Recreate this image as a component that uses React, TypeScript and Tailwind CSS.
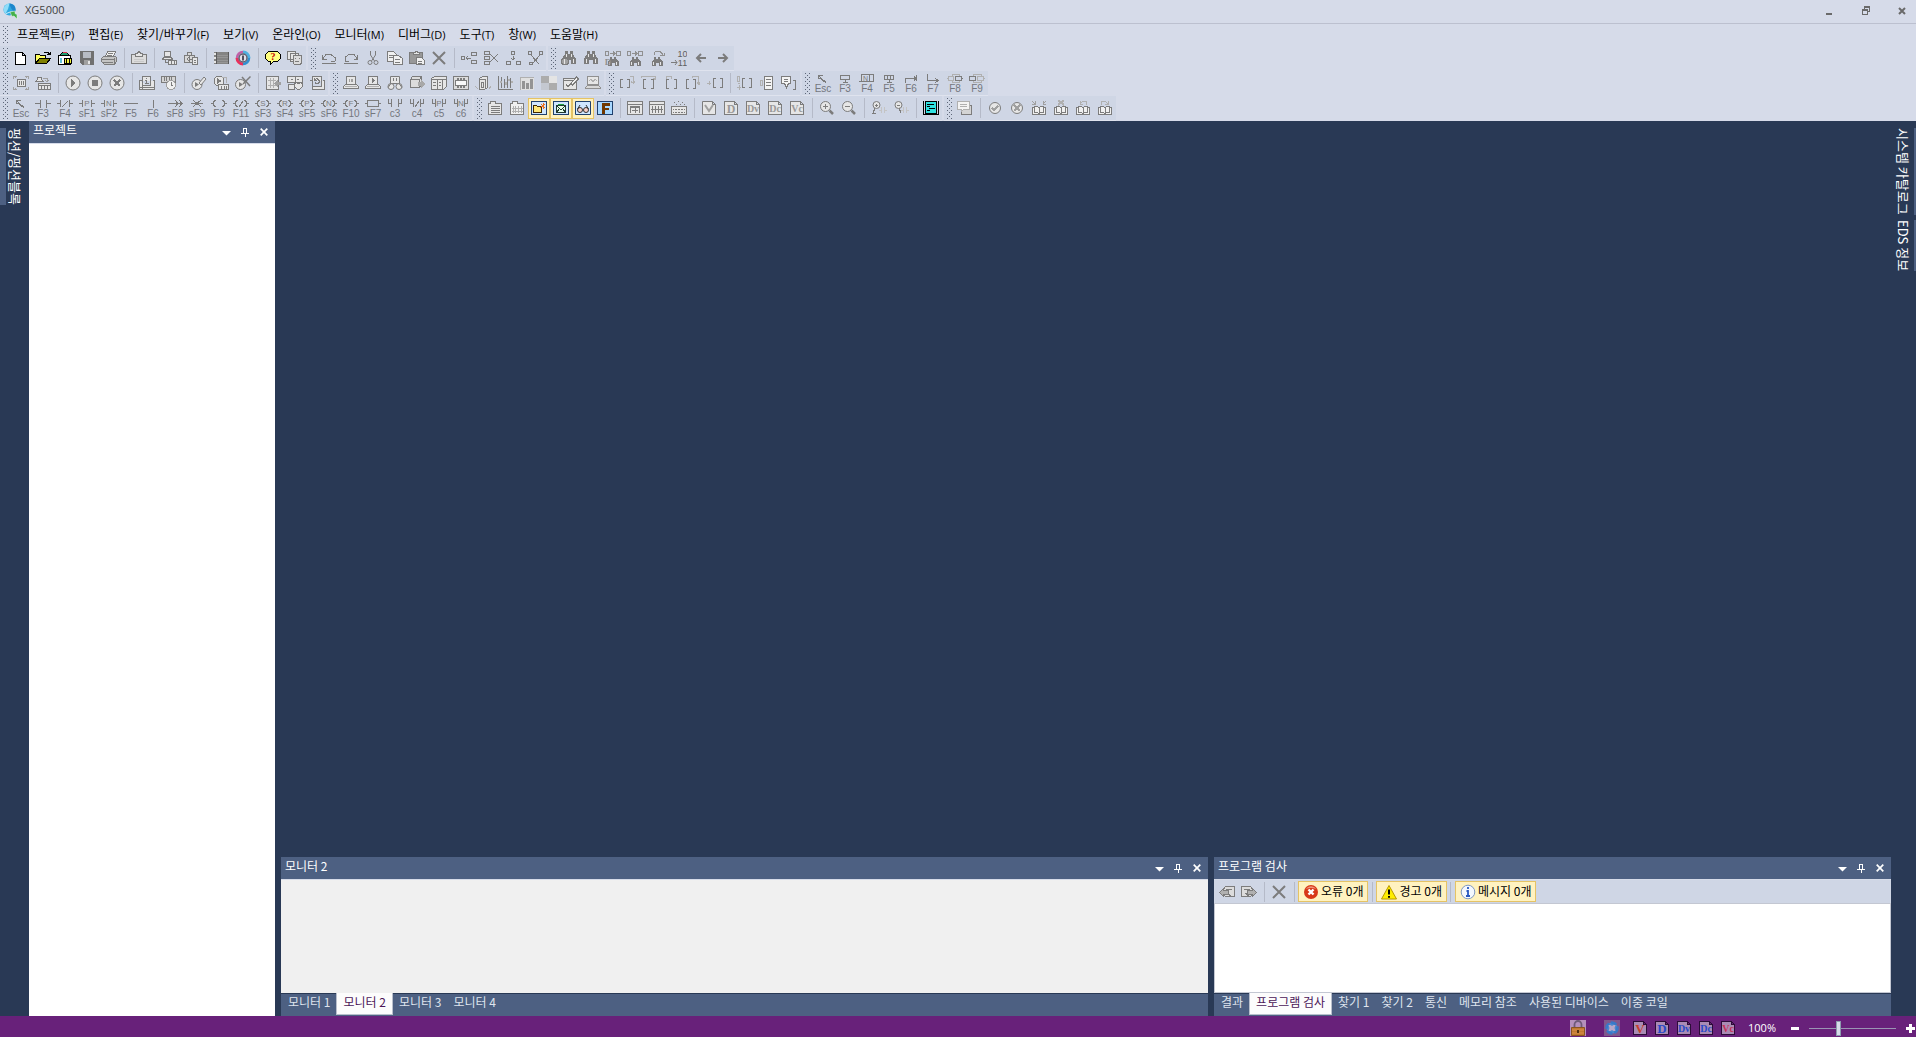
import { useState } from 'react';
import type { ReactNode } from 'react';

const G = '#7c7c7c';
const L = '#e6e6e6';
const M = '#b0b0b0';

interface PProps {
  d: string;
  f?: string;
  s?: string;
  w?: number;
}

function P({ d, f = 'none', s = G, w = 1 }: PProps) {
  return <path d={d} fill={f} stroke={s} strokeWidth={w} />;
}

function T({ x, y, size = 8, c = G, children }: { x: number; y: number; size?: number; c?: string; children: ReactNode }) {
  return (
    <text x={x} y={y} fontSize={size} fill={c} textAnchor="middle" fontWeight="bold" fontFamily="Liberation Serif, serif">
      {children}
    </text>
  );
}

// 공통 도형
const round = (
  <circle cx="8" cy="8" r="7" fill={L} stroke={G} shapeRendering="auto" />
);
const smallRound = (
  <circle cx="8" cy="8" r="5.5" fill={L} stroke={G} shapeRendering="auto" />
);
const page = (
  <P d="M1.5 1.5h10l3 3v10h-13zM11.5 1.5v3h3" f={L} />
);
const laptop = (
  <>
    <P d="M3.5 1.5h9v8h-9z" f={L} />
    <P d="M.5 13.5v-2l2-2h11l2 2v2z" f={L} />
    <P d="M2 11.5h12" s={M} />
  </>
);
const binoculars = (
  <>
    <path d="M4 1h3v3h2V1h3v3l3 5v5h-5v-4H6v4H1V9l3-5z" fill={G} />
    <path d="M3 9h1v4H3zM12 9h1v4h-1zM5 4h1v3H5zM10 4h1v3h-1z" fill={L} />
  </>
);
const smallBinoculars = (
  <>
    <path d="M5 7h2v2h2V7h2v2l3 3v4h-4v-3H7v3H3v-4l2-3z" fill={G} />
    <path d="M4 12h1v3H4zM11 12h1v3h-1z" fill={L} />
  </>
);
const book = (
  <>
    <P d="M1.5 7.5h2v-1h3l1.5 1 1.5-1h3v1h2v7h-13z" f="#f0f0f0" />
    <P d="M8 8v5M4 12.5h2l2 1 2-1h2M3.5 8v5M12.5 8v5" />
  </>
);
const chip = (
  <>
    <P d="M3.5 8.5h12v6h-12z" f={L} />
    <P d="M4 10.5h11M6 11v3M9 11v3M12 11v3" />
  </>
);
const lens = (
  <>
    <circle cx="6.5" cy="6.5" r="5" fill={L} stroke={G} shapeRendering="auto" />
    <path d="M10.5 10.5l3.5 3.5" stroke={G} strokeWidth="2.5" shapeRendering="auto" />
  </>
);
const viewFrame = <P d="M.5 1.5h15v13H.5z" f="#cfe6ff" s="#20406c" />;

const icons: Record<string, ReactNode> = {
  newFile: <P d="M2.5 2.5h7l3 3v9h-10zM9.5 2.5v3h3" f="#fff" s="#000" />,
  open: (
    <>
      <P d="M.5 13.5v-9h4l1 1h5v3" f="#ffff60" s="#000" />
      <P d="M.5 13.5l4-5h11l-4 5z" f="#808000" s="#000" />
      <P d="M9 3l2-1h2l2 3M12 4.5h3v-3" s="#000" />
    </>
  ),
  openProject: (
    <>
      <P d="M1.5 5.5h12v9h-12z" f="#fff" s="#000" />
      <P d="M3.5 5l2-3h4l2 3z" f="#20a070" s="#000" />
      <P d="M6 2.5h4" s="#e03050" />
      <P d="M4 8v5" s="#60c0d8" w={2} />
      <P d="M7.5 8.5h7v5h-7z" f="#f0f040" s="#000" />
      <P d="M9.5 9v5M12 9v5" s="#000" />
    </>
  ),
  save: (
    <>
      <path d="M1 1h14v14H3l-2-2z" fill="#707070" />
      <path d="M4 2h8v6H4z" fill="#b8bcc4" />
      <path d="M5 10h6v5H5z" fill="#a0a0a0" />
      <path d="M9 11h2v3H9z" fill={L} />
    </>
  ),
  print: (
    <>
      <P d="M4.5 6.5l2-5h8l-2 5z" f="#f0f0f0" />
      <P d="M7 3.5h5M6 5.5h5" />
      <P d="M.5 8.5l2-2h12l1 1v4l-2 3h-10l-3-3z" f="#c4c4c4" />
      <P d="M1 9.5h12M2 12.5h10M13.5 8v6" />
    </>
  ),
  clipboard: (
    <>
      <P d="M.5 4.5h15v9h-15z" f="#dcdcdc" />
      <P d="M4.5 6.500v-3h2l1-2h1l1 2h2v3z" f={L} />
      <P d="M3 9.500h10M3 11.500h10" s="#c8c8c8" />
    </>
  ),
  download: (
    <>
      <P d="M3.5 1.5h6v5h-6zM1.5 9.5v-1l2-1h6l2 1v1z" f={L} />
      <P d="M4.5 10v2.500h3" />
      <P d="M7.5 10.5h8v4h-8zM10 11v3M13 11v3" f={L} />
    </>
  ),
  sync: (
    <>
      <P d="M1.5 5.5h10v7h-10zM4.5 5v-3h4v3" f="#d8d8d8" />
      <P d="M4 9l2-2v4zM6 9.5h5" />
      <P d="M9.5 7.5h5v7h-5zM11 10h2M11 12h2" f={L} />
    </>
  ),
  module: (
    <>
      <path d="M1 2h15v12H1z" fill="#848484" />
      <P d="M4 5h11M4 7.5h11M4 10h11M4 12.5h11" s="#969696" />
      <path d="M1 3h2v2H1zM1 7h2v2H1zM1 11h2v2H1z" fill={L} />
      <P d="M15.500 2v12M3.500 2v12" s="#5c5c5c" />
    </>
  ),
  ring: (
    <g shapeRendering="auto">
      <path d="M8 2a6 6 0 0 0-6 6" fill="none" stroke="#c060a8" strokeWidth="2.5" />
      <path d="M2 8a6 6 0 0 0 6 6" fill="none" stroke="#e8305c" strokeWidth="3" />
      <path d="M8 2a6 6 0 0 1 6 6" fill="none" stroke="#50b0e0" strokeWidth="3" />
      <path d="M14 8a6 6 0 0 1-6 6" fill="none" stroke="#3090d0" strokeWidth="2.5" />
      <circle cx="8" cy="8" r="4" fill="#e0e0e8" stroke="#606070" strokeWidth="1.5" />
      <path d="M8 5.500v5" stroke="#505060" strokeWidth="2" />
    </g>
  ),
  help: (
    <>
      <P d="M3.5 1.5h9l3 3v4l-3 3h-4l-3 3v-3h-2l-3-3v-4z" f="#ffff80" s="#000" />
      <T x={8} y={10} size={10} c="#c00000">?</T>
    </>
  ),
  users: (
    <>
      <P d="M.5 1.5h8v8h-8zM3.5 3.5h8v8h-8z" f={L} />
      <P d="M6.5 5.5h8v8l-2 1h-5l-1-1z" f="#dcdcdc" />
      <P d="M8 8.5h1M12 8.5h1M8 11.5h4" />
    </>
  ),
  undo: <P d="M1.5 5v4h4M2 8.5l3-4h5l4 3v3M10 11.500h4M1 13.5h14" />,
  redo: <P d="M14.5 5v4h-4M14 8.5l-3-4H6l-4 3v3M2 11.500h4M1 13.5h14" />,
  cut: (
    <g shapeRendering="auto">
      <P d="M5.5 1v4l4 6M10.5 1v4l-4 6" />
      <circle cx="5" cy="12.5" r="2" fill="none" stroke={G} />
      <circle cx="11" cy="12.5" r="2" fill="none" stroke={G} />
    </g>
  ),
  copy: (
    <>
      <P d="M.5 1.5h6l3 3v7h-9zM2 5h4M2 7.5h5" f="#f0f0f0" />
      <P d="M6.5 5.5h5l4 3v6h-9zM8 9.5h5M8 12h5" f="#f0f0f0" />
    </>
  ),
  paste: (
    <>
      <P d="M.5 2.5h13v11h-13z" f="#989898" />
      <P d="M4.5 4.5v-2h2v-1h2v1h2v2z" f={L} />
      <P d="M7.5 7.5h5l3 3v4h-8zM9 11h4M9 13h4" f="#f0f0f0" />
    </>
  ),
  remove: (
    <g shapeRendering="auto">
      <P d="M2 2l12 12M14 2L2 14" w={2} />
    </g>
  ),
  insertH: <P d="M.5 6.5h3v3h-3zM5 8h5M7 6l-2 2 2 2M10.5 2.5h5v3h-5zM10.5 10.5h5v3h-5z" />,
  deleteH: (
    <>
      <P d="M1.5 1.5h5v3h-5zM1.5 6.5h5v3h-5zM1.5 11.5h5v3h-5z" />
      <P d="M7 4l8 8M15 4l-8 8" />
    </>
  ),
  insertV: <P d="M6.5 1.5h3v3h-3zM8 6v4M6 8l2 2 2-2M1.5 11.5h4v3h-4zM11.5 11.5h4v3h-4z" />,
  deleteV: (
    <>
      <P d="M1.5 1.5h3v3h-3zM12.5 1.5h3v3h-3zM2.5 12.5h3v2h-3z" />
      <P d="M4 5l8 9M13 5l-8 9" />
    </>
  ),
  findDevice: (
    <>
      {binoculars}
      <circle cx="4" cy="11.500" r="3.500" fill="#a0a0a0" stroke={G} />
      <path d="M3 9h1v5H3z" fill={L} />
    </>
  ),
  find: binoculars,
  replaceDevice: (
    <>
      <P d="M.5 1.5h3v4h-3zM5 3.5h5M8 1.5l2 2-2 2M11.5 1.5h4v4h-4z" s="#909090" />
      {smallBinoculars}
      <T x={3} y={15} size={9} c="#909090">D</T>
    </>
  ),
  replaceText: (
    <>
      <P d="M.5 1.5h3v4h-3zM5 3.5h5M8 1.5l2 2-2 2M11.5 1.5h4v4h-4z" s="#909090" />
      {smallBinoculars}
    </>
  ),
  findNext: (
    <>
      {smallBinoculars}
      <P d="M5 5V3l2-1.5h4l2 2v2M11 5.5h4v-3" s="#909090" />
    </>
  ),
  goto: (
    <g shapeRendering="auto">
      <text x="11.500" y="7" fontSize="9" fill="#606060" textAnchor="middle" fontFamily="Liberation Sans, sans-serif">10</text>
      <text x="11.500" y="15.500" fontSize="9" fill="#606060" textAnchor="middle" fontFamily="Liberation Sans, sans-serif">11</text>
      <P d="M0 12.5h6M4 10l2 2.500-2 2.500" />
    </g>
  ),
  back: (
    <g shapeRendering="auto">
      <P d="M4 8h9M8 4L4 8l4 4" w={2} />
    </g>
  ),
  forward: (
    <g shapeRendering="auto">
      <P d="M3 8h9M8 4l4 4-4 4" w={2} />
    </g>
  ),
  connect: (
    <>
      <P d="M4.500 4.5h8v7h-8z" f={L} />
      <P d="M6.500 6v4M8.500 6v4M10.500 6v4" />
      <P d="M3 3L.5 1M.5 4V1.500h3M13 3l2-2M12 1.5h3.500V4M3 13l-2 2M.5 12v2.500h3M13 13l2 2M12 14.5h3.500V12" s="#a0a0a0" />
    </>
  ),
  modeChange: (
    <>
      <P d="M.5 6.5h8l-2-2v-2h-4v2z" f={L} />
      <P d="M8 3.500h4v3M10 5l2 2 2-2" s="#a0a0a0" />
      {chip}
    </>
  ),
  run: (
    <>
      {round}
      <path d="M6 4l5 4-5 4z" fill={G} />
    </>
  ),
  stop: (
    <>
      {round}
      <path d="M5 5h6v6H5z" fill={G} />
    </>
  ),
  cancel: (
    <>
      {round}
      <P d="M5 5l6 6M11 5l-6 6" w={2} />
    </>
  ),
  info: (
    <>
      <P d="M.5 5.5h3v9h12v-9h-2M.5 5v9.500h12M3.5 1.5h8v9h-8z" f={L} />
      <P d="M7.500 3v1M6 5.500h1.500v3M6 8.500h4" />
      <P d="M1 12.5h14" />
    </>
  ),
  history: (
    <>
      <P d="M.5 1.5h14v6H.5zM3 2v4M5.5 2v4M8 2v4M10.5 2v3" f="#d4d4d4" />
      <circle cx="10" cy="10" r="4.5" fill="#f0f0f0" stroke="#a0a0a0" />
      <P d="M10 7v3h2" />
    </>
  ),
  force: (
    <g shapeRendering="auto">
      <circle cx="6" cy="9.5" r="5" fill={L} stroke={G} />
      <path d="M4 7l4 2.500L4 12z" fill={G} />
      <P d="M8 8l5-6 2 2-5 6z" f={L} />
    </g>
  ),
  forceModule: (
    <>
      <circle cx="6" cy="6" r="5" fill={L} stroke={G} />
      <path d="M4 3l5 3-5 3z" fill={G} />
      <P d="M9 2.500h4v5" s={M} />
      <P d="M5.5 9.5h10v5h-10zM8 11v3M11 11v3M13 11v3" f={L} />
    </>
  ),
  forceOff: (
    <g shapeRendering="auto">
      <circle cx="5.5" cy="9.5" r="5" fill={L} stroke={G} />
      <path d="M4 7l4 2.500L4 12z" fill={G} />
      <P d="M7 2l8 9M15.500 1.500L8 9" w={1.5} />
    </g>
  ),
  ioRefresh: (
    <>
      <P d="M1.5 1.5h12v13h-12z" f={L} />
      <P d="M5.5 3v10M8.5 3v10M3 5.5h8M3 10.5h8" s={M} />
      <path d="M16 7v3h-3v2L9 8.500 13 5v2z" fill="#a0a0a0" />
    </>
  ),
  faultMask: (
    <>
      <P d="M.5 1.5h15v6H.5zM4 4.5h2M10 4.5h2M8 2v5" f={L} />
      <P d="M1.5 9.5h6v5h-6zM7.500 8.500l2-1 2 1 2-1 2 1v3l-3 3h-2l-3-3z" f={L} />
    </>
  ),
  restart: (
    <>
      <P d="M.5 5.5h3v9h12v-9h-2M3.5 1.5h9v10h-9z" f={L} />
      <P d="M6 5l2-1.500 2 2v2l-2 1.500-2-1.500M5 3v2.500h2.500" />
    </>
  ),
  monStart: (
    <>
      {laptop}
      <P d="M6.5 4v3M8 4v3M9.500 4v3" s="#a0a0a0" />
    </>
  ),
  monPause: (
    <>
      {laptop}
      <path d="M7 3l3 2.500L7 8z" fill={G} />
    </>
  ),
  monFind: (
    <g shapeRendering="auto">
      <P d="M3.5 1.5h9v7h-9zM6.500 3v3M9.500 3v3" f={L} />
      <circle cx="4" cy="11.5" r="3" fill={L} stroke={G} />
      <circle cx="12" cy="11.5" r="3" fill={L} stroke={G} />
      <P d="M1 12.500l3-4M15 12.500l-3-4" />
    </g>
  ),
  cube: (
    <>
      <P d="M1.5 4.5l2-3h9v8l-2 3h-9zM1.5 4.5h9v8M10.5 4.5l2-3" f="#dcdcdc" />
      <path d="M9 7h3V5l4 4-4 4v-2H9z" fill="#a8a8a8" />
    </>
  ),
  rack: (
    <>
      <P d="M.5 3.5l3-2h12v10l-3 3H.5z" f={L} />
      <P d="M.5 4.5h15M6.5 4v10M11.5 4v10M2 7.5h3M2 10.5h3M8 7.5h2M8 10.5h2" />
    </>
  ),
  special: (
    <>
      <P d="M.5 1.5h15v13H.5z" f="#dcdcdc" />
      <P d="M2.500 5.500h11v5h-11z" f="#f8f8f8" />
      <path d="M4 3h2v3H4zM7 3h2v3H7zM10 3h2v3h-2zM4 10h2v3H4zM7 10h2v3H7zM10 10h2v3h-2z" fill={G} />
    </>
  ),
  drum: (
    <>
      <P d="M4.5 3.5l3-2h5v11l-3 2h-5zM4.5 4.5h6v9M6.5 7.5h2v5h-2z" f={L} />
      <P d="M0 11l3 3M16 11l-2 3" s={M} />
    </>
  ),
  trend: (
    <>
      <P d="M1.500 1v13.500h14" />
      <P d="M4.5 2v11M7.5 4v9M10.5 1v12M13.500 3v10" />
      <P d="M3.500 6v2M8.500 7v3M11.500 4v2M14.500 6v2" s={M} w={2} />
    </>
  ),
  bars: (
    <>
      <path d="M1 2h14v13H1z" fill="#e0e0e0" />
      <P d="M1.500 2v13M1 2.500h14" s={M} />
      <path d="M3 6h3v8H3zM7 8h3v6H7zM11 4h3v10h-3z" fill="#949494" />
    </>
  ),
  checker: (
    <>
      <path d="M0 1h8v7H0zM8 8h8v7H8z" fill="#acacac" />
      <path d="M8 1h8v7H8z" fill="#e4e4e4" />
      <path d="M0 8h8v7H0z" fill="#c4c8d0" />
    </>
  ),
  edit: (
    <>
      <P d="M.5 3.5h13v11H.5zM.5 5.5h13" f={L} />
      <P d="M3 9.500l2 2 3-3M7.500 9l6-7 2 2-6 6z" f="#f0f0f0" />
    </>
  ),
  wave: (
    <>
      <P d="M2.5 1.5h11v8h-11z" f={L} s="#909090" />
      <P d="M4 6l2-2 2 3 2-3 2 2" s={M} />
      <P d="M.5 13.5v-1l2-2h11l2 2v1z" f="#d8d8d8" s="#909090" />
    </>
  ),
  br2: (
    <>
      <P d="M3.5 4.5h-2v8h2M8 4.5h2v8H8" />
      <P d="M11 1.5h3.500v7M12 6.5l2.500 2 1-2" s={M} />
    </>
  ),
  br3: (
    <>
      <P d="M4.5 4.5h-2v9h2M10 4.5h2v9h-2" />
      <P d="M.5 3V1h14v3M12.5 3l2 2" s={M} />
    </>
  ),
  br4: (
    <>
      <P d="M5.5 4.5h-2v9h2M11 4.5h2v9h-2" />
      <P d="M3.5 4V1.500h5v2" s={M} />
    </>
  ),
  br5: (
    <>
      <P d="M3.5 4.5h-2v9h2M8 4.5h2v9H8" />
      <P d="M7.5 3V1.500h6v8M12 7.5l2 2 1-2" s={M} />
    </>
  ),
  br6: (
    <>
      <P d="M8.5 3.5h-2v9h2M13 3.5h2v9h-2" />
      <P d="M0 8h4M2 6v4" s={M} />
    </>
  ),
  br7: (
    <>
      <P d="M7.5 3.5h-2v9h2M12 3.5h2v9h-2" />
      <P d="M.5 1v5h2V1zM1 8.5h2M0 12.5h4M2 10v5" s={M} />
    </>
  ),
  br8: (
    <>
      <P d="M5.5 1.5h8v13h-8z" f="#f4f4f4" />
      <P d="M7 4.5h5M7 7.5h5M7 10.5h5M5.5 1v14" />
      <P d="M1.5 5.5h2v5h-2z" s={M} />
    </>
  ),
  br9: (
    <>
      <P d="M.5 1.5h9v7h-2l-2 4-2-4h-3z" f="#f4f4f4" />
      <P d="M3 4.5h4M3 6.5h4M12 5.5h2v9h-2" />
    </>
  ),
  docTab: (
    <>
      <P d="M1.5 3.5h2v-2h5v2h6v11h-13z" f={L} />
      <P d="M4 6.5h9M4 8.5h9M4 10.5h9M4 12.5h9" />
    </>
  ),
  ladderTab: (
    <>
      <P d="M1.5 3.5h2v-2h5v2h6v11h-13z" f="#f0f0f0" />
      <P d="M4 6v7M6.5 6v7M9.5 6v7M12 6v7M3 8h11M3 11h11" s={M} />
    </>
  ),
  zoomIn: (
    <>
      {lens}
      <P d="M4 6.5h5M6.5 4v5" />
    </>
  ),
  zoomOut: (
    <>
      {lens}
      <P d="M4 6.5h5" />
    </>
  ),
  viewProject: (
    <>
      {viewFrame}
      <P d="M2.5 12.5v-7h3l1 1h4v6z" f="#ffe878" s="#402800" />
      <P d="M9 8l5-4M10 4l4 4M12 3v6" s="#f07018" />
    </>
  ),
  viewMessage: (
    <>
      {viewFrame}
      <P d="M3.5 5.5h9v7h-9z" f="#e8ffe8" s="#203830" />
      <P d="M4 6l4 4 4-4M4 12l2-3M12 12l-2-3" s="#203830" />
      <P d="M5 4.5h6" s="#20a040" />
    </>
  ),
  viewMonitor: (
    <g shapeRendering="auto">
      {viewFrame}
      <circle cx="5" cy="10" r="2.5" fill="#f8d0c8" stroke="#303030" />
      <circle cx="11" cy="10" r="2.5" fill="#f8d0c8" stroke="#303030" />
      <P d="M2.500 9l2.500-4M13.500 9L11 5" s="#303030" />
    </g>
  ),
  viewFlag: (
    <>
      <P d="M.5 1.500h15v13H.5z" f="#a8d8ff" s="#20406c" />
      <path d="M5 3h8v3H8v2h4v2H8v4H5z" fill="#703800" />
    </>
  ),
  varList: (
    <>
      <P d="M.5 1.5h15v13H.5zM1 4.5h14" f={L} />
      <P d="M3.5 13V7.500h9V13M5 10.5h6M8 8v5M3 6.5h10" />
    </>
  ),
  grid: (
    <>
      <P d="M.5 1.5h15v13H.5zM1 4.5h14" f={L} />
      <P d="M3.5 6v7M6.5 6v7M9.5 6v7M12.5 6v7M2 9.5h12" />
    </>
  ),
  memory: (
    <>
      <P d="M.5 6.5h15v8H.5z" f={L} />
      <P d="M2 9.5h12M2 12.5h12" />
      <P d="M3 8v6M6 8v6M9 8v6M12 8v6" s={L} />
      <P d="M3 2v1M7 1v1M11 2v1M5 4v1M9 4v1M13 4v1" />
    </>
  ),
  pageV: (
    <g shapeRendering="auto">
      {page}
      <P d="M4 5l4 6 4-6" w={2} s="#a0a0a0" />
    </g>
  ),
  pageD: (
    <>
      {page}
      <T x={8} y={13} size={12} c="#989898">D</T>
    </>
  ),
  pageDV: (
    <>
      {page}
      <T x={8} y={12} size={10} c="#989898">Dv</T>
    </>
  ),
  pageDC: (
    <>
      {page}
      <T x={8} y={12} size={10} c="#989898">Dc</T>
    </>
  ),
  pageVC: (
    <>
      {page}
      <T x={8} y={12} size={10} c="#989898">Vc</T>
    </>
  ),
  contactIn: (
    <>
      <circle cx="5.5" cy="5" r="3.500" fill={L} stroke={G} shapeRendering="auto" />
      <P d="M4 5h3M5.5 3.500v3M4 8l-2 5h3" />
      <P d="M8 10h2M10.5 7v6M13.5 7v6M14 10h2" s="#c4c4c4" />
    </>
  ),
  contactOut: (
    <>
      <circle cx="5.5" cy="5" r="3.500" fill={L} stroke={G} shapeRendering="auto" />
      <P d="M4 5h3M6 8l2 5" />
      <P d="M8 10h2M10.5 7v6M13.5 7v6M14 10h2" s="#c4c4c4" />
    </>
  ),
  console: (
    <>
      <path d="M0 1h1v14H0zM15 1h1v14h-1zM2 1h12v14H2zM0 14h16v1H0z" fill="#000" />
      <path d="M3 2h10v11H3z" fill="#30e0e0" />
      <P d="M4 4.500h7M4 6.5h3M6 8.5h6M4 10.5h3" s="#000" />
    </>
  ),
  memo: (
    <>
      <P d="M4.5 5.5h10v9h-10z" f="#d4d4d4" />
      <P d="M.5 1.5h12v8h-6l-2 2v-2h-4z" f="#f4f4f4" s={M} />
      <P d="M3 4.5h7M3 6.5h7" s={M} />
    </>
  ),
  check: (
    <>
      {smallRound}
      <P d="M5 8l2 2 4-4" w={2} s="#a0a0a0" />
    </>
  ),
  uncheck: (
    <>
      {smallRound}
      <P d="M5 5l6 6M11 5l-6 6" w={2} s="#a0a0a0" />
    </>
  ),
  bookMark: (
    <>
      {book}
      <P d="M1 1l3 3M4 1v3H1M15 1l-3 3M12 1v3h3" s="#a0a0a0" />
    </>
  ),
  bookDel: (
    <>
      {book}
      <P d="M5 0l6 5M11 0L5 5" s={M} w={2} />
    </>
  ),
  bookPrev: (
    <>
      {book}
      <P d="M5 1v3h3M5 3.5l3-2h3l1 3" s={M} />
    </>
  ),
  bookNext: (
    <>
      {book}
      <P d="M11 1v3H8M11 3.5l-3-2H5l-1 3" s={M} />
    </>
  ),
};

function Mid({ children }: { children: string }) {
  return (
    <text x="8" y="7" fontSize="8" fill={G} textAnchor="middle" fontFamily="Liberation Sans, sans-serif">
      {children}
    </text>
  );
}

const contactLines = <P d="M0 4.5h3.500M3.500 1v7M12.500 1v7M12.5 4.5H16" />;
const coilLines = <P d="M0 4.5h2M4.5 1l-2 2v3l2 2M11.5 1l2 2v3l-2 2M14 4.5h2" />;
const branchLines = <P d="M1.5 0v4h3M4.500 0v8M11.500 0v8M12 4h2.500V0" />;

// 래더 기호 (16x9)
const symbols: Record<string, ReactNode> = {
  arrow: <P d="M3.500 5V1.500H8M4 2l7 6.500M3.500 5l2-1 4 4" />,
  no: <P d="M0 4.5h5.500M5.5 1v8M11.5 1v8M12 4.5h4" />,
  nc: <>{contactLines}<P d="M5 8l6-6" /></>,
  np: <>{contactLines}<Mid>P</Mid></>,
  nn: <>{contactLines}<Mid>N</Mid></>,
  hline: <P d="M1 4.5h14" />,
  vline: <P d="M8.5 1v8" />,
  harrow: <P d="M1 4.5h13M8 1l3 3.500L8 8M12 1l3 3.500L12 8" />,
  star: <P d="M2 4.5h12M4 1l8 7M12 1L4 8" />,
  coil: coilLines,
  coilNot: <>{coilLines}<P d="M6 8l4-6" /></>,
  coilS: <>{coilLines}<Mid>S</Mid></>,
  coilR: <>{coilLines}<Mid>R</Mid></>,
  coilP: <>{coilLines}<Mid>P</Mid></>,
  coilN: <>{coilLines}<Mid>N</Mid></>,
  coilF: <>{coilLines}<Mid>F</Mid></>,
  box: <P d="M0 4.5h2.500M2.5 1.5h11v6h-11zM14 4.5h2" />,
  orNo: branchLines,
  orNc: <>{branchLines}<P d="M6 8l4-6" /></>,
  orP: <>{branchLines}<Mid>P</Mid></>,
  orN: <>{branchLines}<Mid>N</Mid></>,
  boxDown: <P d="M3.5 1.5h9v4h-9zM8 6v3M6 8.5h5" />,
  boxN: (
    <>
      <P d="M0 7.500h2.500M2.5 .5h12v7h-12zM10.5 1v7" />
      <text x="6.500" y="7" fontSize="7" fill={G} textAnchor="middle" fontFamily="Liberation Sans, sans-serif">N</text>
    </>
  ),
  boxMid: <P d="M3.5 1.5h9v4h-9zM6.5 1v4M9.5 1v4M8 6v3M6 8.5h5" />,
  lineUp: <P d="M2.5 9V4.500h11M13.5 1v6M11 2.5l2 2-2 2" />,
  lineDown: <P d="M2.5 0v6.500h11M10 4l3 2.500L10 9" />,
  joinR: (
    <>
      <P d="M0 4.5h1.500v-2h5v4h-5v-2M5.500 2V.5h7v2M5.500 7v1.500h7V7" s={M} />
      <P d="M8.5 2.5h6v4h-6zM15 4.5h1" />
    </>
  ),
  joinL: (
    <>
      <P d="M8.5 2.5h6v4h-6zM4 2V.5h8v2M4 7v1.500h8V7M15 4.5h1" s={M} />
      <P d="M.5 2.5h6v4h-6z" />
    </>
  ),
};

type Item = string | { key: string; sym: string };

const k = (key: string, sym: string): Item => ({ key, sym });

const rows: Item[][][] = [
  [
    ['newFile', 'open', 'openProject', 'save', 'print', '|', 'clipboard', '|', 'download', 'sync', '|', 'module', 'ring', '|', 'help', 'users'],
    ['undo', 'redo', 'cut', 'copy', 'paste', 'remove', '|', 'insertH', 'deleteH', 'insertV', 'deleteV'],
    ['findDevice', 'find', 'replaceDevice', 'replaceText', 'findNext', 'goto', 'back', 'forward'],
  ],
  [
    ['connect', 'modeChange', '|', 'run', 'stop', 'cancel', '|', 'info', 'history', '|', 'force', 'forceModule', 'forceOff', '|', 'ioRefresh', 'faultMask', 'restart'],
    ['monStart', 'monPause', 'monFind', 'cube', 'rack', 'special', 'drum', 'trend', 'bars', 'checker', 'edit', 'wave'],
    ['br2', 'br3', 'br4', 'br5', 'br6', '|', 'br7', 'br8', 'br9'],
    [
      k('Esc', 'arrow'), k('F3', 'boxDown'), k('F4', 'boxN'), k('F5', 'boxMid'),
      k('F6', 'lineUp'), k('F7', 'lineDown'), k('F8', 'joinR'), k('F9', 'joinL'),
    ],
  ],
  [
    [
      k('Esc', 'arrow'), k('F3', 'no'), k('F4', 'nc'), k('sF1', 'np'), k('sF2', 'nn'), k('F5', 'hline'), k('F6', 'vline'),
      k('sF8', 'harrow'), k('sF9', 'star'), k('F9', 'coil'), k('F11', 'coilNot'), k('sF3', 'coilS'), k('sF4', 'coilR'),
      k('sF5', 'coilP'), k('sF6', 'coilN'), k('F10', 'coilF'), k('sF7', 'box'), k('c3', 'orNo'), k('c4', 'orNc'),
      k('c5', 'orP'), k('c6', 'orN'),
    ],
    [
      'docTab', 'ladderTab', 'viewProject', 'viewMessage', 'viewMonitor', 'viewFlag', '|', 'varList', 'grid', 'memory', '|',
      'pageV', 'pageD', 'pageDV', 'pageDC', 'pageVC', '|', 'zoomIn', 'zoomOut', '|', 'contactIn', 'contactOut', '|', 'console',
    ],
    ['memo', '|', 'check', 'uncheck', 'bookMark', 'bookDel', 'bookPrev', 'bookNext'],
  ],
];

const activeTools = ['viewProject', 'viewMessage', 'viewMonitor'];

const menus = [
  ['프로젝트', 'P'],
  ['편집', 'E'],
  ['찾기/바꾸기', 'F'],
  ['보기', 'V'],
  ['온라인', 'O'],
  ['모니터', 'M'],
  ['디버그', 'D'],
  ['도구', 'T'],
  ['창', 'W'],
  ['도움말', 'H'],
];

function Icon({ children }: { children: ReactNode }) {
  return (
    <svg width="16" height="16" viewBox="0 0 16 16" className="shrink-0" shapeRendering="crispEdges" aria-hidden="true">
      {children}
    </svg>
  );
}

function Grip({ dots }: { dots: number }) {
  return (
    <svg width="5" height={dots * 4 + 1} className="mr-0.5 shrink-0" shapeRendering="crispEdges" aria-hidden="true">
      {Array.from({ length: dots + 1 }, (_, i) => i * 4).map((y) => (
        <path key={y} d={`M0 ${y}h1v1H0zM4 ${y}h1v1H4zM2 ${y + 2}h1v1H2z`} fill="#5d6678" />
      ))}
    </svg>
  );
}

function Divider() {
  return (
    <span className="flex w-2 shrink-0 justify-center">
      <span className="h-5 w-px bg-[#b5bac8]" />
    </span>
  );
}

function Tool({ item }: { item: Item }) {
  if (item === '|') return <Divider />;
  if (typeof item !== 'string') {
    return (
      <button className="flex h-[22px] w-[22px] shrink-0 flex-col items-center gap-px pt-0.5">
        <svg width="16" height="9" viewBox="0 0 16 9" className="shrink-0" shapeRendering="crispEdges" aria-hidden="true">
          {symbols[item.sym]}
        </svg>
        <span className="font-['Liberation_Sans',sans-serif] text-[10px] leading-[10px] text-[#74777e]">{item.key}</span>
      </button>
    );
  }
  const active = activeTools.includes(item);
  return (
    <button
      aria-label={item}
      className={`flex h-[21px] w-[22px] shrink-0 items-center justify-center ${
        active ? 'border border-[#e5c365] bg-[#fff2c0]' : ''
      }`}
    >
      <Icon>{icons[item]}</Icon>
    </button>
  );
}

function Caption({ title }: { title: string }) {
  return (
    <div className="flex h-[23px] items-start justify-between border-b border-[#d6dbe9] bg-[#4d6082] pl-1 pr-[5px] text-white">
      <h2 className="text-xs leading-[18px]">{title}</h2>
      <div className="flex gap-[7px] pt-[5px]">
        <button aria-label="메뉴" className="flex h-3 w-3 items-center justify-center">
          <svg width="9" height="9" viewBox="0 0 9 9"><path d="M0 3h9L4.5 7.5z" fill="#fff" /></svg>
        </button>
        <button aria-label="고정" className="flex h-3 w-3 items-center justify-center">
          <svg width="8" height="9" viewBox="0 0 8 9" shapeRendering="crispEdges">
            <path d="M2.5 5V.5h3V5M5 0v5M0 5.5h8M4 6v3" fill="none" stroke="#fff" />
          </svg>
        </button>
        <button aria-label="닫기" className="flex h-3 w-3 items-center justify-center">
          <svg width="8" height="8" viewBox="0 0 8 8"><path d="M.7.7l6.600 6.600M7.300.7L.7 7.300" stroke="#fff" strokeWidth="1.7" /></svg>
        </button>
      </div>
    </div>
  );
}

function Tabs({ names, initial }: { names: string[]; initial: number }) {
  const [current, setCurrent] = useState(initial);
  return (
    <div className="flex h-[23px] items-start border-t border-[#293955] bg-[#4d6082] pl-px" role="tablist">
      {names.map((name, i) => (
        <button
          key={name}
          role="tab"
          aria-selected={i === current}
          onClick={() => setCurrent(i)}
          className={`-mt-px h-[22px] shrink-0 whitespace-nowrap px-1.5 pb-1 text-xs ${
            i === current
              ? 'border border-t-0 border-[#b9bfcc] bg-[#fcfcfc] leading-4 text-[#4b1658]'
              : 'leading-[18px] text-[#dfe4ee]'
          }`}
        >
          {name}
        </button>
      ))}
    </div>
  );
}

const statusPages = [
  { label: 'V', color: '#c8402c' },
  { label: 'D', color: '#2848c8' },
  { label: 'Dv', color: '#2848c8' },
  { label: 'Dc', color: '#2848c8' },
  { label: 'Vc', color: '#c83058' },
];

export default function App() {
  const [zoom, setZoom] = useState(100);

  return (
    <div className="flex min-h-screen flex-col overflow-hidden bg-[#293955] font-['Noto_Sans_CJK_KR','Noto_Sans',sans-serif] text-xs text-[#1b1b1b]">
      {/* 제목 표시줄 */}
      <header className="flex h-6 shrink-0 items-center justify-between border-b border-[#bcc0cf] bg-[#d6dbe9] pb-0.5 pl-[3px] pr-2.5">
        <div className="flex items-center gap-[7px]">
          <svg width="15" height="16" viewBox="0 0 15 16" aria-hidden="true">
            <circle cx="6.5" cy="6.5" r="6" fill="#2fa8e0" />
            <path d="M6.5.5a6 6 0 0 0-4 10.300q3-4 4-10.300z" fill="#8fdcf8" />
            <path d="M6.5.5q1 6 5.500 8.500a6 6 0 0 0-5.500-8.500z" fill="#1c86cc" />
            <path d="M2.5 10.800q4-2.500 9.500-1.800" stroke="#c8ecfa" fill="none" />
            <path d="M7 9l5-1v2.500l2 1V16l-3-3-2 .5z" fill="#44b04a" stroke="#e8f4e8" strokeWidth=".5" />
          </svg>
          <h1 className="font-['Open_Sans','Noto_Sans_CJK_KR',sans-serif] text-[11px] text-[#404040]">XG5000</h1>
        </div>
        <div className="flex items-center gap-7">
          <button aria-label="최소화" className="flex h-4 w-2 items-center">
            <svg width="6" height="8" viewBox="0 0 6 8"><path d="M0 6h6v2H0z" fill="#6a6a6a" /></svg>
          </button>
          <button aria-label="이전 크기로" className="flex h-4 w-2 items-center">
            <svg width="8" height="9" viewBox="0 0 8 9" className="shrink-0" shapeRendering="crispEdges">
              <path d="M2.5 3V.5h5v5H6M2 1h6M.5 3.5h5v5h-5zM0 4h6" fill="none" stroke="#6a6a6a" />
            </svg>
          </button>
          <button aria-label="닫기" className="flex h-4 w-2 items-center">
            <svg width="8" height="8" viewBox="0 0 8 8" className="shrink-0"><path d="M1 1l6 6M7 1L1 7" stroke="#6a6a6a" strokeWidth="2" /></svg>
          </button>
        </div>
      </header>

      {/* 메뉴 */}
      <nav className="flex h-[22px] shrink-0 items-start bg-[#d6dbe9] pl-[3px] pt-0.5">
        <Grip dots={4} />
        {menus.map(([name, key]) => (
          <button key={key} className="px-[7px] leading-4 whitespace-nowrap text-black">
            {name}
            <span className="font-['Open_Sans',sans-serif] text-[11px]">({key})</span>
          </button>
        ))}
      </nav>

      {/* 도구 모음 */}
      <div className="shrink-0 bg-[#d6dbe9]">
        {rows.map((bars, r) => (
          <div key={r} className="flex h-[25px] gap-0.5">
            {bars.map((bar, b) => (
              <div key={b} className="flex items-center border-b border-[#dfe3ee] bg-[#cfd6e5] pl-[3px]" role="toolbar">
                <Grip dots={5} />
                {bar.map((item, i) => (
                  <Tool key={i} item={item} />
                ))}
              </div>
            ))}
          </div>
        ))}
      </div>

      {/* 작업 영역 */}
      <div className="flex min-h-0 flex-1">
        <aside className="w-[29px] shrink-0 pt-[7px]">
          <button className="w-[27px] border-l-[6px] border-[#4d6082] py-0.5 text-[13px] leading-[20px] text-white [text-orientation:sideways] [writing-mode:vertical-rl]">
            펑션/펑션블록
          </button>
        </aside>

        <section className="flex w-[246px] shrink-0 flex-col bg-white">
          <Caption title="프로젝트" />
        </section>

        <main className="flex min-w-0 flex-1 flex-col justify-end pl-1.5">
          <div className="flex gap-1.5">
            <section className="flex min-w-0 flex-[927] flex-col">
              <Caption title="모니터 2" />
              <div className="h-[113px] bg-[#f0f0f0]" />
              <Tabs names={['모니터 1', '모니터 2', '모니터 3', '모니터 4']} initial={1} />
            </section>

            <section className="flex min-w-0 flex-[677] flex-col">
              <Caption title="프로그램 검사" />
              <div className="flex h-[23px] items-center bg-[#cfd6e5] pl-0.5" role="toolbar">
                <button aria-label="이전 메시지" className="flex w-[22px] justify-center">
                  <Icon>
                    <P d="M4.5 5.500l2-3h9v10h-9l-2-2zM7 5h6M8 9l4 3" f="#dcdcdc" />
                    <P d="M.5 8.5l4-4v2h5v4h-5v2z" f={M} />
                  </Icon>
                </button>
                <button aria-label="다음 메시지" className="flex w-[22px] justify-center">
                  <Icon>
                    <P d="M.5 2.5h9l2 3v5l-2 2h-9zM3 5h6M4 9l4 3" f="#dcdcdc" />
                    <P d="M15.5 8.5l-4-4v2h-5v4h5v2z" f={M} />
                  </Icon>
                </button>
                <Divider />
                <button aria-label="지우기" className="flex w-[22px] justify-center">
                  <Icon>
                    <g shapeRendering="auto">
                      <P d="M2 2l12 12M14 2L2 14" w={2} />
                    </g>
                  </Icon>
                </button>
                <Divider />
                <button className="flex h-[21px] items-center gap-0.5 border border-[#e5c365] bg-[#fff2c0] px-1 text-black">
                  <svg width="16" height="16" viewBox="0 0 16 16" aria-hidden="true">
                    <circle cx="8" cy="8" r="7" fill="#d83818" />
                    <path d="M3 5a6 6 0 0 1 10 0q-5-2-10 0z" fill="#f09078" />
                    <path d="M5.5 5.5l5 5M10.5 5.5l-5 5" stroke="#fff" strokeWidth="2.4" />
                  </svg>
                  <span className="pb-0.5 leading-4">오류 0개</span>
                </button>
                <Divider />
                <button className="flex h-[21px] items-center gap-0.5 border border-[#e5c365] bg-[#fff2c0] px-1 text-black">
                  <svg width="16" height="16" viewBox="0 0 16 16" aria-hidden="true">
                    <path d="M8 1.5L15.5 15H.5z" fill="#ffee00" stroke="#b89800" />
                    <path d="M8 5.5v5M8 12v1.700" stroke="#000" strokeWidth="2" />
                  </svg>
                  <span className="pb-0.5 leading-4">경고 0개</span>
                </button>
                <Divider />
                <button className="flex h-[21px] items-center gap-0.5 border border-[#e5c365] bg-[#fff2c0] px-1 text-black">
                  <svg width="16" height="16" viewBox="0 0 16 16" aria-hidden="true">
                    <circle cx="8" cy="8" r="6.8" fill="#f4f8ff" stroke="#8098c0" />
                    <path d="M8 3v2M6.5 7H8v5M6 12h4" stroke="#2858c0" strokeWidth="1.8" fill="none" />
                  </svg>
                  <span className="pb-0.5 leading-4">메시지 0개</span>
                </button>
              </div>
              <div className="h-[90px] border border-[#c3c7d2] bg-white" />
              <Tabs
                names={['결과', '프로그램 검사', '찾기 1', '찾기 2', '통신', '메모리 참조', '사용된 디바이스', '이중 코일']}
                initial={1}
              />
            </section>
          </div>
        </main>

        <aside className="flex w-[25px] shrink-0 flex-col items-end gap-[5px] pt-[7px]">
          {['시스템 카탈로그', 'EDS 정보'].map((name) => (
            <button
              key={name}
              className="w-[22px] border-r-2 border-[#4d6082] py-0.5 text-[13px] leading-[18px] text-white [text-orientation:sideways] [writing-mode:vertical-rl]"
            >
              {name}
            </button>
          ))}
        </aside>
      </div>

      {/* 상태 표시줄 */}
      <footer className="flex h-[21px] shrink-0 items-center justify-end bg-[#68217a] pt-[3px] text-white">
        <svg width="16" height="16" viewBox="0 0 16 16" className="mr-[18px]" aria-hidden="true">
          <path d="M0 0h16v16H0z" fill="#b490bc" />
          <path d="M4.5 8V4.500a3.500 3.500 0 0 1 7 0V8" fill="none" stroke="#6e5a78" strokeWidth="1.8" />
          <path d="M1.5 7.5h13v8h-13z" fill="#c07830" stroke="#8a5420" />
          <path d="M2 10h12M2 13h12" stroke="#d89048" />
          <path d="M7 10h2v3H7z" fill="#503010" />
        </svg>
        <svg width="16" height="16" viewBox="0 0 16 16" className="mr-3" aria-hidden="true">
          <path d="M0 0h16v16H0z" fill="#80588c" />
          <circle cx="8" cy="8" r="5.5" fill="#4888d0" stroke="#3878c8" strokeWidth="2.5" strokeDasharray="6 2" />
          <path d="M4.5 5h2l1.500 1 1.500-1h2l-1 3 1 3h-2l-1.500-1-1.500 1h-2l1-3z" fill="#b8a8c8" />
        </svg>
        <div className="mr-3 flex gap-1.5">
          {statusPages.map(({ label, color }) => (
            <Icon key={label}>
              <P d="M1.5 1.5h10l3 3v10h-13zM11.5 1.5v3h3" f="#a98bb4" s="#2c0c38" />
              <T x={8} y={label.length > 1 ? 12 : 13} size={label.length > 1 ? 10 : 13} c={color}>
                {label}
              </T>
            </Icon>
          ))}
        </div>
        <output className="mr-[15px] font-['Open_Sans',sans-serif] text-[11px]">{zoom}%</output>
        <button aria-label="축소" className="mr-2.5" onClick={() => setZoom(Math.max(10, zoom - 10))}>
          <svg width="8" height="8" viewBox="0 0 8 8"><path d="M0 3h8v3H0z" fill="#fff" /></svg>
        </button>
        <input
          type="range"
          aria-label="확대/축소"
          min={10}
          max={280}
          value={zoom}
          onChange={(e) => setZoom(Number(e.target.value))}
          className="h-[15px] w-[87px] appearance-none bg-transparent [&::-webkit-slider-runnable-track]:h-px [&::-webkit-slider-runnable-track]:bg-[#9a94b4] [&::-webkit-slider-thumb]:-mt-[7px] [&::-webkit-slider-thumb]:h-[15px] [&::-webkit-slider-thumb]:w-[5px] [&::-webkit-slider-thumb]:appearance-none [&::-webkit-slider-thumb]:border [&::-webkit-slider-thumb]:border-[#8c9cae] [&::-webkit-slider-thumb]:bg-[#d6dbe9]"
        />
        <button aria-label="확대" className="ml-2.5 mr-px" onClick={() => setZoom(Math.min(280, zoom + 10))}>
          <svg width="9" height="9" viewBox="0 0 9 9"><path d="M0 3h3V0h3v3h3v3H6v3H3V6H0z" fill="#fff" /></svg>
        </button>
      </footer>
    </div>
  );
}
